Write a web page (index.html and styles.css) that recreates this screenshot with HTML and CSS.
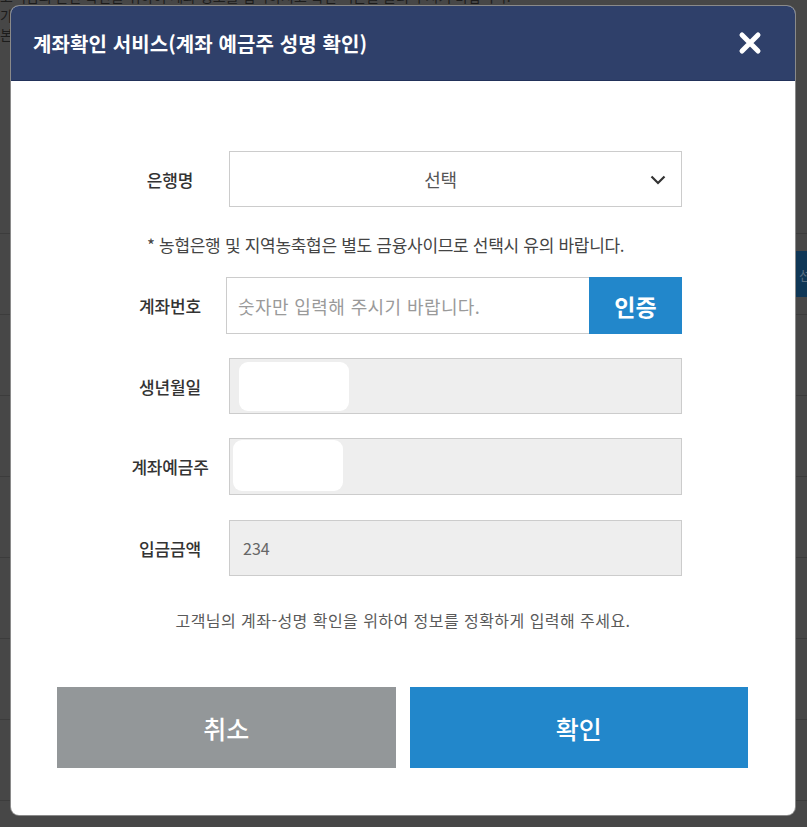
FILE: index.html
```html
<!DOCTYPE html>
<html lang="ko">
<head>
<meta charset="utf-8">
<title>계좌확인 서비스</title>
<link rel="stylesheet" href="styles.css">
</head>
<body>
<div class="page">
  <div class="bg">
    <p class="bg-text">고객님의 본인 확인을 위하여 계좌 정보를 입력하시고 확인 버튼을 눌러 주시기 바랍니다.</p>
    <p class="bg-text bg-short">가</p>
    <p class="bg-text bg-short">본</p>
    <div class="bg-top"></div>
    <div class="bg-row"><span class="bg-btn">선택</span></div>
    <div class="bg-row"></div>
    <div class="bg-row"></div>
    <div class="bg-row"></div>
    <div class="bg-row"></div>
    <div class="bg-row"></div>
    <div class="bg-row"></div>
    <div class="bg-row"></div>
  </div>

  <div class="modal">
    <div class="modal-head">
      <h1 class="modal-title">계좌확인 서비스(계좌 예금주 성명 확인)</h1>
      <span class="close">
        <svg width="24" height="24" viewBox="0 0 24 24"><path d="M4 4 L20 20 M20 4 L4 20" stroke="#fff" stroke-width="5" stroke-linecap="round" fill="none"/></svg>
      </span>
    </div>
    <div class="modal-body">
      <div class="form">
        <div class="row">
          <span class="label">은행명</span>
          <div class="field select">
            <span class="select-text">선택</span>
            <svg class="chev" width="16" height="10" viewBox="0 0 16 10"><path d="M1.5 1.5 L8 8 L14.5 1.5" stroke="#333" stroke-width="2.2" fill="none"/></svg>
          </div>
        </div>
        <p class="note">* 농협은행 및 지역농축협은 별도 금융사이므로 선택시 유의 바랍니다.</p>
        <div class="row row-acc">
          <span class="label">계좌번호</span>
          <div class="field account">
            <span class="placeholder">숫자만 입력해 주시기 바랍니다.</span>
            <span class="auth-btn">인증</span>
          </div>
        </div>
        <div class="row row-gap">
          <span class="label">생년월일</span>
          <div class="field disabled"><span class="blob blob-birth"></span></div>
        </div>
        <div class="row row-gap row-tall">
          <span class="label">계좌예금주</span>
          <div class="field disabled"><span class="blob blob-holder"></span></div>
        </div>
        <div class="row row-gap row-last">
          <span class="label">입금금액</span>
          <div class="field disabled"><span class="amount">234</span></div>
        </div>
      </div>
      <p class="foot-note">고객님의 계좌-성명 확인을 위하여 정보를 정확하게 입력해 주세요.</p>
      <div class="actions">
        <span class="btn btn-cancel">취소</span>
        <span class="btn btn-ok">확인</span>
      </div>
    </div>
  </div>
</div>
</body>
</html>
```

FILE: styles.css
```css
* { box-sizing: border-box; }
html, body { margin: 0; padding: 0; }
body {
  width: 807px;
  height: 827px;
  overflow: hidden;
  background: #474747;
  font-family: "Noto Sans CJK KR", "Noto Sans", sans-serif;
}
.page {
  position: relative;
  width: 807px;
  height: 827px;
  overflow: hidden;
}
.bg { width: 807px; }
.bg-text {
  margin: 0;
  font-size: 14px;
  line-height: 19px;
  height: 19px;
  color: #1c1c1c;
  white-space: nowrap;
}
.bg-text:first-child { margin-top: -13px; }
.bg-top { height: 190px; border-bottom: 1px solid #3c3c3c; }
.bg-row {
  height: 81px;
  border-bottom: 1px solid #3c3c3c;
  display: flex;
  justify-content: flex-end;
  align-items: center;
}
.bg-btn {
  width: 60px;
  height: 46px;
  margin-right: -49px;
  background: #0f3756;
  color: #5a6f82;
  font-size: 13px;
  display: flex;
  align-items: center;
  padding-left: 3px;
}

.modal {
  position: absolute;
  left: 11px;
  top: 6px;
  width: 784px;
  height: 809px;
  background: #fff;
  border-radius: 8px;
  overflow: hidden;
  box-shadow: 0 0 0 1px #8a8a8a;
}
.modal-head {
  height: 75px;
  background: #2f406a;
  border-bottom: 1px solid #22325a;
  display: flex;
  align-items: center;
  justify-content: space-between;
  padding: 0 33px 0 22px;
}
.modal-title {
  margin: 0;
  color: #fff;
  font-size: 20px;
  font-weight: 700;
  letter-spacing: 0.1px;
}
.close { display: flex; }

.modal-body { padding-top: 70px; }
.form { padding: 0 113px 0 107px; }
.row {
  display: grid;
  grid-template-columns: 104px 1fr;
  column-gap: 7px;
  align-items: center;
  height: 56px;
}
.row-acc { height: 57px; }
.row-gap { margin-top: 24px; }
.row-last { margin-top: 25px; }
.row-tall { height: 57px; }
.label {
  text-align: center;
  font-size: 17px;
  font-weight: 500;
  color: #333;
  letter-spacing: -0.2px;
}
.field {
  height: 100%;
  border: 1px solid #cccccc;
  display: flex;
  align-items: center;
  position: relative;
}
.select { justify-content: center; background: #fff; }
.select-text { font-size: 18px; color: #555; letter-spacing: -0.3px; margin-left: -30px; }
.chev { position: absolute; right: 15px; top: 23px; }
.note {
  margin: 27px 0 21px 29px;
  font-size: 17px;
  line-height: 22px;
  color: #444;
  letter-spacing: -0.3px;
  white-space: nowrap;
}
.account {
  margin-left: -3px;
  height: 57px;
  justify-content: space-between;
  border-right: none;
}
.placeholder {
  padding-left: 11px;
  font-size: 18px;
  color: #9a9a9a;
  letter-spacing: 0.4px;
}
.auth-btn {
  width: 93px;
  height: 57px;
  margin: -1px 0;
  background: #2287cb;
  color: #fff;
  font-size: 23px;
  font-weight: 700;
  display: flex;
  align-items: center;
  justify-content: center;
}
.disabled { background: #eeeeee; }
.blob {
  display: block;
  background: #fff;
  border-radius: 9px;
}
.blob-birth { width: 110px; height: 49px; margin-left: 9px; }
.blob-holder { width: 110px; height: 51px; margin-left: 3px; margin-top: -3px; }
.amount {
  padding-left: 13px;
  font-size: 16px;
  color: #666;
}
.foot-note {
  margin: 34px 0 0;
  text-align: center;
  font-size: 16px;
  line-height: 20px;
  color: #5a5a5a;
  letter-spacing: 0.45px;
}
.actions {
  display: flex;
  gap: 14px;
  padding: 0 47px 0 46px;
  margin-top: 57px;
}
.btn {
  flex: 1;
  height: 81px;
  display: flex;
  align-items: center;
  justify-content: center;
  color: #fff;
  font-size: 25px;
  font-weight: 500;
}
.btn-cancel { background: #939799; }
.btn-ok { background: #2287cb; }
```
